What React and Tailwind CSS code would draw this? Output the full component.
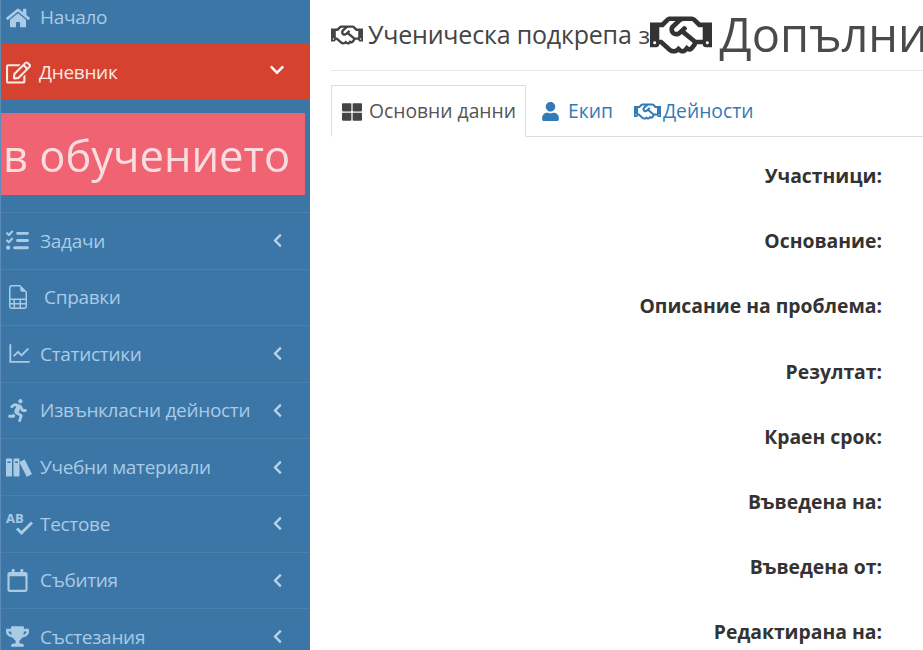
import React from "react";
import { FaHome, FaRegEdit, FaChevronLeft, FaChevronDown, FaRunning, FaRegCalendar, FaTrophy, FaRegHandshake, FaThLarge, FaUser } from "react-icons/fa";
import { FaListCheck } from "react-icons/fa6";
import { ImBooks } from "react-icons/im";
import { BsFileEarmarkSpreadsheet } from "react-icons/bs";
import { AiOutlineLineChart } from "react-icons/ai";

function AbCheck({ size }) {
  return (
    <svg width={size + 3} height={size} viewBox="0 0 28 25" fill="none" className="overflow-visible">
      <text x="0" y="12" fontSize="13" fontWeight="700" fontFamily="'Open Sans', sans-serif" fill="currentColor">AB</text>
      <path d="M11 17.5l4.5 4.5L26 11.5" stroke="currentColor" strokeWidth="3" />
    </svg>
  );
}

const items = [
  [FaListCheck, "Задачи", true, 23],
  [BsFileEarmarkSpreadsheet, "Справки", false, 24],
  [AiOutlineLineChart, "Статистики", true, 27],
  [FaRunning, "Извънкласни дейности", true, 23],
  [ImBooks, "Учебни материали", true, 27],
  [AbCheck, "Тестове", true, 25],
  [FaRegCalendar, "Събития", true, 23],
  [FaTrophy, "Състезания", true, 23],
];

const labels = ["Участници:", "Основание:", "Описание на проблема:", "Резултат:", "Краен срок:", "Въведена на:", "Въведена от:", "Редактирана на:"];

function Row({ Icon, label, chevron, size }) {
  return (
    <div className="h-[56.6px] shrink-0 flex items-center border-b border-[#4a80ad] text-[#a9cbe6] text-[19px] pl-[5px] pr-[25px]">
      <span className="w-[34px] flex items-center shrink-0 overflow-visible">
        <Icon size={size} />
      </span>
      <span className={`flex-1 whitespace-nowrap tracking-[-0.3px] ${label === "Справки" ? "pl-[4px]" : ""}`}>{label}</span>
      {chevron && <FaChevronLeft size={15} className="text-[#b5d2ea]" />}
    </div>
  );
}

export default function App() {
  return (
    <div className="w-[923px] h-[650px] overflow-hidden flex bg-white font-['Open_Sans',sans-serif]">
      <aside className="w-[310px] h-[650px] shrink-0 bg-[#3c76a6] overflow-hidden flex flex-col border-l border-[#5b8db8]">
        <div className="h-[44px] shrink-0 flex items-center text-[#a9cbe6] text-[19px] pl-[5px] pb-[9px]">
          <span className="w-[34px]"><FaHome size={24} /></span>
          <span className="tracking-[-0.3px]">Начало</span>
        </div>
        <div className="h-[55px] shrink-0 bg-[#d64230] flex items-center text-[#fbe9e4] text-[19px] pl-[5px] pr-[25px] pt-[1px]">
          <span className="w-[33px]"><FaRegEdit size={25} /></span>
          <span className="flex-1 tracking-[-0.3px]">Дневник</span>
          <FaChevronDown size={16} className="text-white -mt-[4px]" />
        </div>
        <div className="h-[14px] shrink-0" />
        <div className="h-[82px] w-[305px] shrink-0 bg-[#ef6372] -ml-px flex items-center text-[#fbdde0] text-[43.5px] pl-[3px] pt-[4px] whitespace-nowrap">
          <span className="blur-[0.5px]">в обучението</span>
        </div>
        <div className="h-[18px] shrink-0 border-b border-[#4a80ad]" />
        {items.map(([Icon, label, chevron, size]) => (
          <Row key={label} Icon={Icon} label={label} chevron={chevron} size={size} />
        ))}
      </aside>
      <main className="flex-1 min-w-0 pl-[21px] overflow-hidden">
        <div className="h-[71px] border-b border-[#e8e8e8] flex items-center whitespace-nowrap overflow-hidden text-[#444] pb-[1px]">
          <FaRegHandshake size={32} className="shrink-0 mr-[5px]" />
          <span className="text-[25px] tracking-[-0.2px]">Ученическа подкрепа</span>
          <span className="text-[24px] ml-[7px] w-[10px]">з</span>
          <span className="flex items-center text-[47px] text-[#4a4a4a] ml-[1px]">
            <FaRegHandshake size={62} className="shrink-0 mr-[8px] text-[#333] blur-[0.5px]" />
            <span className="blur-[0.6px]">Допълнителна</span>
          </span>
        </div>
        <div className="mt-[14px] h-[52px] border-b border-[#ddd] flex items-stretch text-[19.3px] whitespace-nowrap">
          <div className="w-[195px] h-[52px] bg-white border border-[#ddd] border-b-white flex items-center pl-[10px] pt-[1px] text-[#555]">
            <FaThLarge size={20} className="text-[#444] mr-[7px]" />
            Основни данни
          </div>
          <div className="flex items-center pl-[15px] pt-[1px] text-[#337ab7]">
            <FaUser size={19} className="mr-[8px]" />
            Екип
          </div>
          <div className="flex items-center pl-[21px] pt-[1px] text-[#337ab7]">
            <FaRegHandshake size={27} className="mr-[2px]" />
            Дейности
          </div>
        </div>
        <div className="pt-[6px] pr-[41px] flex flex-col">
          {labels.map((l) => (
            <div key={l} className="h-[65.2px] shrink-0 flex items-center justify-end font-bold text-[#333] text-[19.35px] whitespace-nowrap">
              {l}
            </div>
          ))}
        </div>
      </main>
    </div>
  );
}
